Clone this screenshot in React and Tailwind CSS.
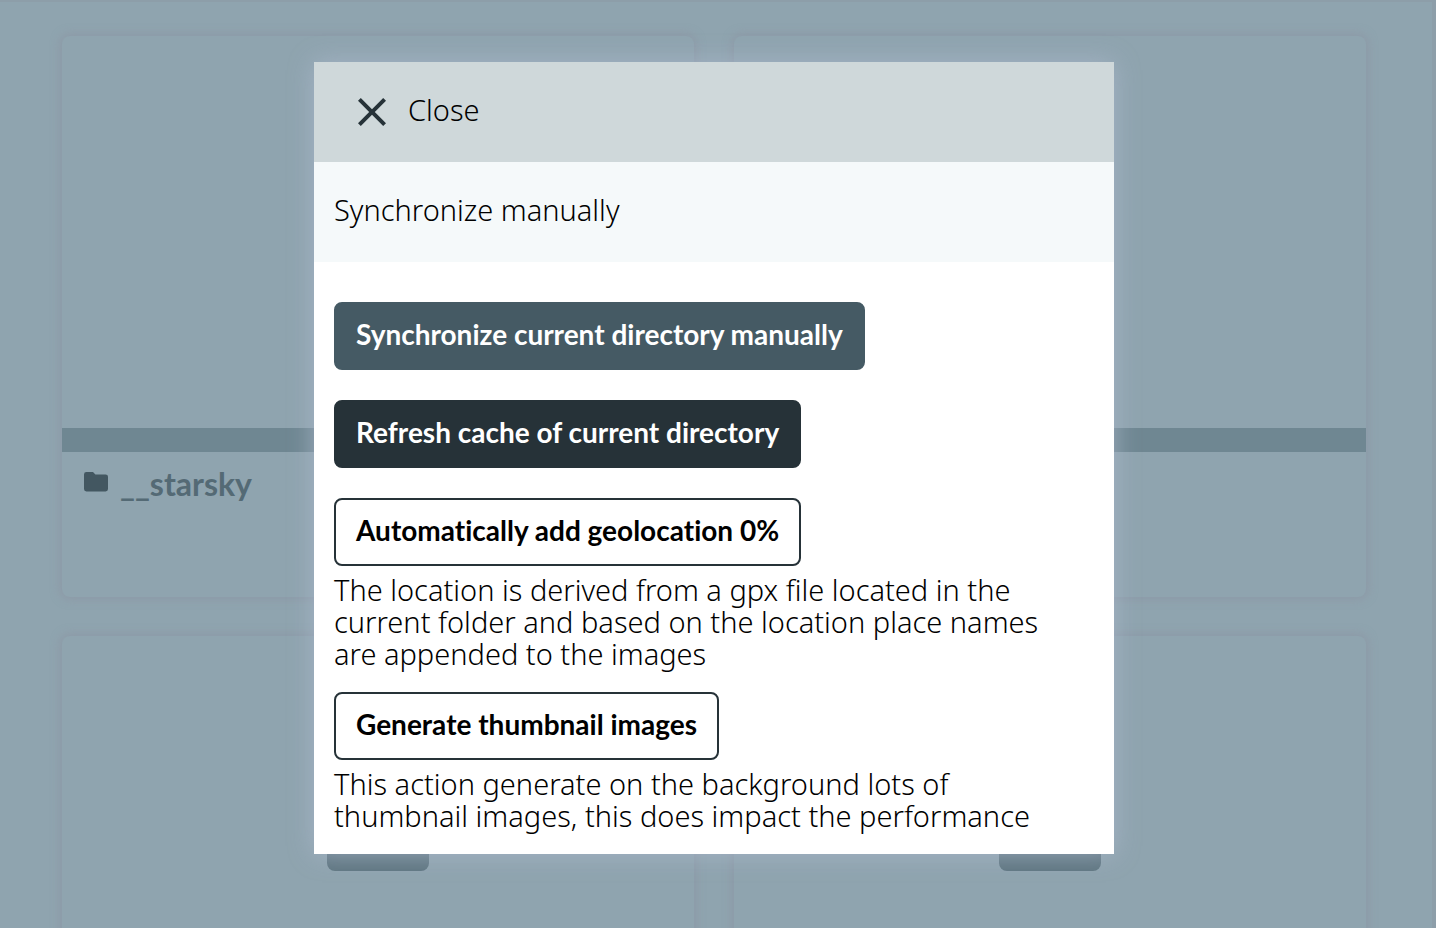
const cards = [
  { id: "starsky", name: "__starsky" },
  { id: "second" },
  { id: "third" },
  { id: "fourth" },
];

function FolderIcon() {
  return (
    <svg viewBox="0 0 24 20" className="h-5 w-6 shrink-0 fill-[#435761]" aria-hidden="true">
      <path d="M2.4 0H9l2.4 2.4h10.200A2.400 2.400 0 0 1 24 4.800V17A2.400 2.400 0 0 1 21.600 19.400H2.400A2.400 2.400 0 0 1 0 17V2.400A2.400 2.400 0 0 1 2.400 0Z" />
    </svg>
  );
}

function CloseIcon() {
  return (
    <svg viewBox="0 0 28 28" className="h-7 w-7 shrink-0 fill-[#263238]" aria-hidden="true">
      <path d="M28 2.820 25.180 0 14 11.180 2.820 0 0 2.820 11.180 14 0 25.180 2.820 28 14 16.820 25.180 28 28 25.180 16.820 14Z" />
    </svg>
  );
}

function Card({ name }) {
  return (
    <article className="h-[561px] rounded-lg shadow-[0_0_10px_2px_rgba(140,145,160,0.6)]">
      <div className="flex h-[392px] items-center justify-center">
        <span className="h-[77px] w-[102px] rounded-lg bg-[#5f7681]" />
      </div>
      <div className="h-6 bg-[#6f8792]" />
      {name && (
        <div className="flex items-start gap-3 px-[22px] pt-5">
          <FolderIcon />
          <h2 className="font-['Lato','Open_Sans',sans-serif] text-[32px] leading-6 font-bold text-[#546a75]">
            {name}
          </h2>
        </div>
      )}
    </article>
  );
}

const buttonBase =
  "block h-[68px] rounded-lg border-2 px-5 pb-1 font-['Lato','Open_Sans',sans-serif] text-[28px] leading-8 font-bold whitespace-nowrap [font-variant-ligatures:none]";

export default function App() {
  return (
    <div className="relative h-screen overflow-hidden border-t-2 border-r-4 border-[#8d9ea9] bg-[#8fa4af] font-['Noto_Sans','Open_Sans',sans-serif]">
      <main className="grid grid-cols-2 gap-x-10 gap-y-[39px] pt-[34px] pr-[66px] pl-[62px]">
        {cards.map((card) => (
          <Card key={card.id} name={card.name} />
        ))}
      </main>

      <div className="absolute inset-0 flex items-start justify-center pt-[60px] pr-1">
        <section
          role="dialog"
          aria-modal="true"
          aria-labelledby="dialog-title"
          className="w-[800px] bg-white text-[29px] leading-8 font-light text-black shadow-[0_0_24px_rgba(170,182,202,0.8)]"
        >
          <div className="flex h-[100px] items-center bg-[#cfd8da] px-11">
            <button type="button" className="flex items-center gap-[22px]">
              <CloseIcon />
              <span className="pb-1">Close</span>
            </button>
          </div>
          <h1 id="dialog-title" className="flex h-[100px] items-center bg-[#f5f9fa] px-5 pb-1">
            Synchronize manually
          </h1>
          <div className="px-5 pt-10 pb-[22px]">
            <button type="button" className={`${buttonBase} border-[#455a64] bg-[#455a64] text-white`}>
              Synchronize current directory manually
            </button>
            <button type="button" className={`${buttonBase} mt-[30px] border-[#263238] bg-[#263238] text-white`}>
              Refresh cache of current directory
            </button>
            <button type="button" className={`${buttonBase} mt-[30px] border-[#263238] bg-white`}>
              Automatically add geolocation 0%
            </button>
            <p className="mt-2 pr-10">
              The location is derived from a gpx file located in the current folder and based on the
              location place names are appended to the images
            </p>
            <button type="button" className={`${buttonBase} mt-[22px] border-[#263238] bg-white`}>
              Generate thumbnail images
            </button>
            <p className="mt-2 pr-10">
              This action generate on the background lots of thumbnail images, this does impact the
              performance
            </p>
          </div>
        </section>
      </div>
    </div>
  );
}
